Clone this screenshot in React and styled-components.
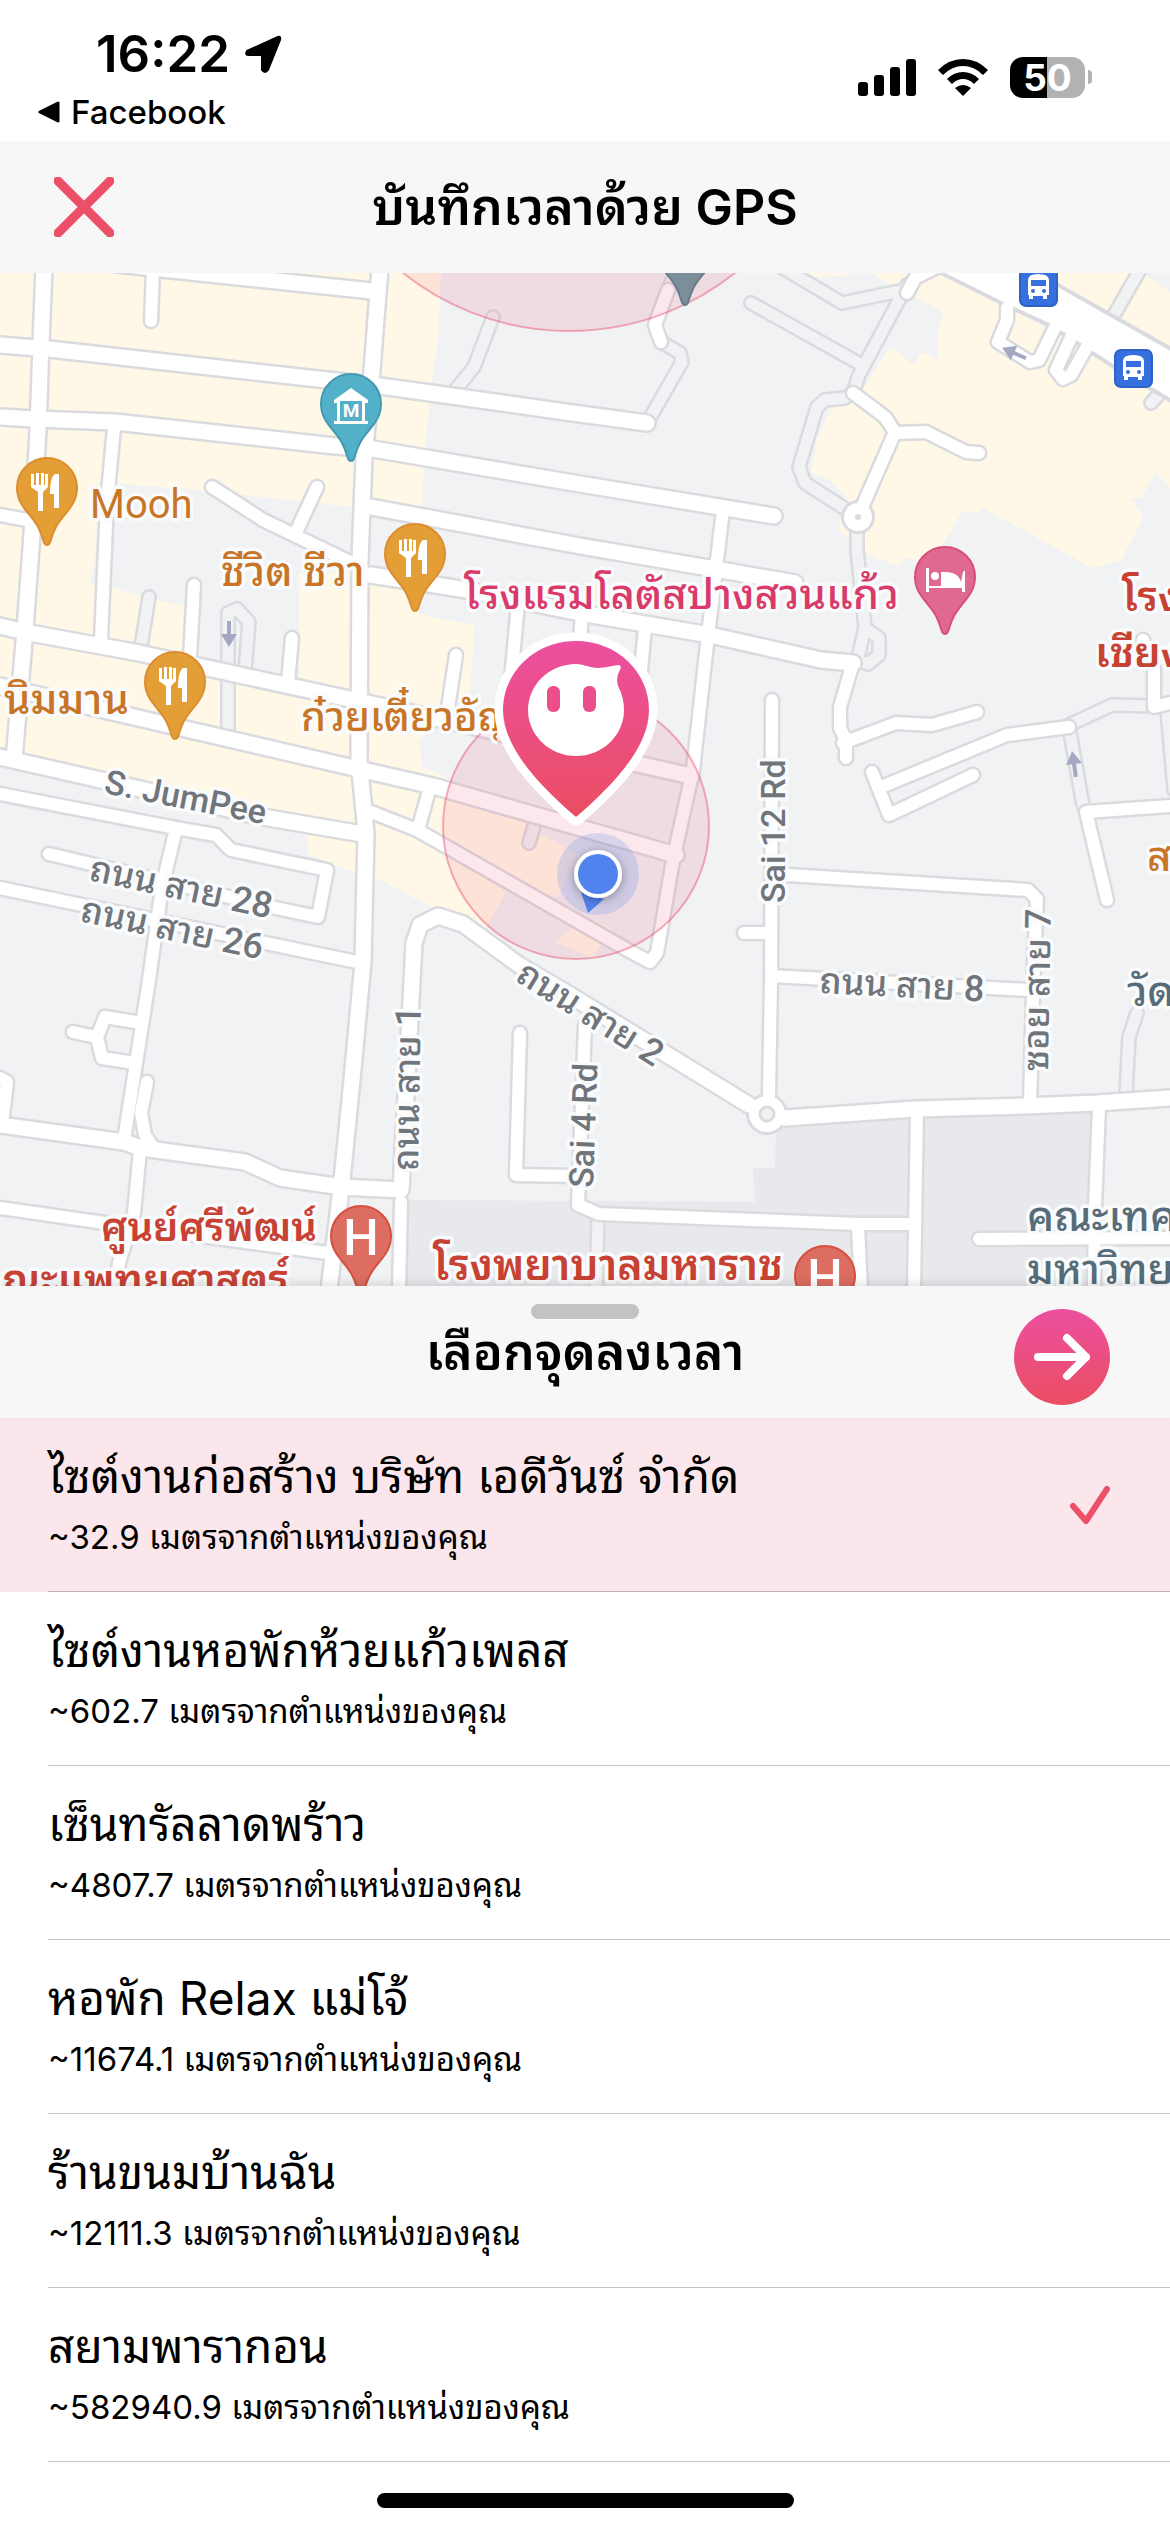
// clock in by GPS: map on top, list of check-in points below
import React, { useState } from 'react';
import styled, { createGlobalStyle } from 'styled-components';

const GlobalStyle = createGlobalStyle`
  * {
    box-sizing: border-box;
  }
  body {
    margin: 0;
    background-color: #fff;
    color: #000;
    font-family: Inter, 'Noto Sans Thai Looped', Loma, Waree, 'Noto Sans Thai', sans-serif;
  }
  button {
    border: none;
    padding: 0;
    background: none;
    color: inherit;
    font: inherit;
    cursor: pointer;
  }
`;

const Screen = styled.div`
  display: flex;
  flex-direction: column;
  min-height: 100vh;
`;

const StatusBar = styled.div`
  display: flex;
  justify-content: space-between;
  height: 141px;
  padding: 24px 78px 0 36px;
`;

const StatusLeft = styled.div`
  display: flex;
  flex-direction: column;
`;

const Clock = styled.div`
  display: flex;
  align-items: center;
  gap: 13px;
  padding-left: 60px;
  font-size: 51px;
  font-weight: 600;
  line-height: 60px;
`;

const BackLink = styled.a`
  display: flex;
  align-items: center;
  gap: 11px;
  color: #000;
  font-size: 33px;
  font-weight: 500;
  line-height: 56px;
  text-decoration: none;
`;

const StatusRight = styled.div`
  display: flex;
  align-items: center;
  gap: 21px;
  height: 106px;
`;

const Battery = styled.div`
  display: flex;
  align-items: center;
  gap: 3px;
`;

const BatteryBody = styled.div`
  width: 75px;
  height: 41px;
  border-radius: 13px;
  background: linear-gradient(to right, #000 50%, #b2b2b2 50%);
  color: #fff;
  font-size: 37px;
  font-weight: 700;
  line-height: 41px;
  text-align: center;
`;

const BatteryTip = styled.div`
  width: 4px;
  height: 14px;
  border-radius: 0 4px 4px 0;
  background-color: #b2b2b2;
`;

const Header = styled.header`
  display: grid;
  grid-template-columns: 60px 1fr 60px;
  align-items: center;
  height: 132px;
  padding: 0 54px;
  background-color: #f7f7f7;
`;

const Title = styled.h1`
  margin: 0;
  font-size: 50px;
  font-weight: 600;
  line-height: 72px;
  text-align: center;
`;

const IconButton = styled.button`
  display: flex;
  align-items: center;
  justify-content: center;
`;

const MapArea = styled.main`
  position: relative;
  flex: 1;
  min-height: 600px;
  overflow: hidden;
  background-color: #f0f2f4;
`;

const MapCanvas = styled.svg`
  position: absolute;
  inset: 0;
  width: 100%;
  height: 100%;
`;

const MapLabel = styled.text`
  fill: ${props => props.$color};
  stroke: #fafbfc;
  stroke-width: 7px;
  stroke-linejoin: round;
  paint-order: stroke;
  font-family: Roboto, 'Noto Sans Thai Looped', Loma, Waree, 'Noto Sans Thai', sans-serif;
  font-size: ${props => props.$size}px;
  font-weight: ${props => props.$weight || 500};
`;

const PinLetter = styled.text`
  fill: #fff;
  font-family: Roboto, sans-serif;
  font-size: ${props => props.$size}px;
  font-weight: ${props => props.$weight};
  text-anchor: middle;
`;

const SheetHeader = styled.div`
  display: grid;
  grid-template-columns: 96px 1fr 96px;
  align-items: center;
  height: 132px;
  padding: 18px 60px 8px;
  background-color: #f7f7f7;
  box-shadow: 0 -4px 8px rgba(0, 0, 0, 0.1);
  z-index: 1;
`;

const SheetTitle = styled.div`
  display: flex;
  flex-direction: column;
  align-items: center;
  grid-column: 2;
  height: 106px;
`;

const Handle = styled.div`
  width: 108px;
  height: 15px;
  border-radius: 8px;
  background-color: #c3c4c2;
`;

const Subtitle = styled.h2`
  margin: 0;
  font-size: 50px;
  font-weight: 600;
  line-height: 66px;
`;

const NextButton = styled(IconButton)`
  width: 96px;
  height: 96px;
  border-radius: 50%;
  background-image: linear-gradient(#ec4f9f, #ea4e62);
`;

const SiteList = styled.ul`
  margin: 0;
  padding: 0;
  list-style: none;
`;

const SiteItem = styled.li`
  padding-left: 48px;
  background-color: ${props => (props.$active ? '#fbe7eb' : '#fff')};
`;

const SiteButton = styled.button`
  display: flex;
  align-items: center;
  justify-content: space-between;
  width: 100%;
  height: 174px;
  padding-right: 60px;
  border-bottom: 1px solid ${props => (props.$active ? '#c3b3b8' : '#c5c5c7')};
  text-align: left;
`;

const SiteName = styled.div`
  font-size: 46px;
  line-height: 64px;
`;

const SiteDistance = styled.div`
  font-size: 33px;
  line-height: 58px;
`;

const HomeBar = styled.div`
  display: flex;
  justify-content: center;
  height: 70px;
  padding-top: 31px;
`;

const HomeIndicator = styled.div`
  width: 417px;
  height: 15px;
  border-radius: 8px;
  background-color: #000;
`;

const sites = [
  { name: 'ไซต์งานก่อสร้าง บริษัท เอดีวันซ์ จำกัด', distance: '32.9' },
  { name: 'ไซต์งานหอพักห้วยแก้วเพลส', distance: '602.7' },
  { name: 'เซ็นทรัลลาดพร้าว', distance: '4807.7' },
  { name: 'หอพัก Relax แม่โจ้', distance: '11674.1' },
  { name: 'ร้านขนมบ้านฉัน', distance: '12111.3' },
  { name: 'สยามพารากอน', distance: '582940.9' }
];

const blocks = [
  '0,273 441,273 438,340 432,380 424,460 422,508 352,507 206,491 100,482 95,560 90,583 113,588 150,598 201,610 200,668 299,690 299,573 415,573 418,613 433,617 475,625 470,690 420,740 422,767 452,780 438,797 528,822 524,838 543,835 580,855 557,898 506,892 485,930 433,908 384,882 356,873 309,855 306,830 0,765',
  '585,917 612,928 593,958 555,942',
  '872,273 894,287 915,297 943,312 937,337 939,360 921,352 914,365 890,347 862,390 830,410 817,440 811,473 830,480 847,497 838,530 866,553 899,567 904,557 920,563 941,547 962,512 980,513 981,507 1092,568 1121,560 1143,518 1131,498 1141,498 1156,472 1170,488 1170,398 1001,303 941,273',
  '1052,273 1142,273 1170,292 1170,352 1052,285',
  '790,273 850,273 845,276 815,277'
];

const campus =
  '401,1200 755,1202 753,1168 775,1168 776,1120 915,1109 1097,1103 1095,1239 1094,1290 401,1290';

const serviceRoads = [
  '149,597 141,647',
  '228,733 228,613 237,609 249,622 245,670',
  '493,317 474,367 453,393',
  '675,273 668,290',
  '661,342 680,353 682,362 647,423',
  '853,393 845,398 825,400 817,407 799,467 805,483 847,510',
  '853,393 859,375 907,285',
  '751,303 862,365',
  '783,268 842,303 900,291',
  '857,527 857,550 865,628 857,662',
  '865,628 879,638 879,655 868,664 857,660',
  '1141,268 1114,315',
  '1163,390 1151,403',
  '1069,725 1112,705 1154,706',
  '1069,727 1083,805',
  '1167,710 1174,790',
  '535,823 529,843',
  '1137,1013 1129,1037 1126,1093',
  '598,1220 596,1290'
];

const minorRoads = [
  '153,268 151,321',
  '114,427 107,503 101,640',
  '0,515 27,520',
  '212,487 263,520 354,564',
  '317,487 297,530',
  '194,585 190,658',
  '292,638 288,682',
  '456,655 448,708',
  '518,603 511,680',
  '582,613 580,640',
  '645,628 640,680',
  '49,854 271,907 318,917 327,870 231,850 216,835 181,829 0,794',
  '0,888 357,962',
  '175,833 162,887 149,980 124,1140',
  '141,1023 105,1017 97,1037 102,1058 134,1063',
  '73,1032 96,1037',
  '0,1078 7,1082 2,1124',
  '147,1082 141,1113 145,1135 152,1146',
  '140,1150 134,1213 119,1263 115,1290',
  '0,1208 98,1222 327,1253',
  '401,1202 399,1290',
  '520,1033 516,1175 575,1176',
  '585,1025 578,1205 599,1214 858,1224 914,1224',
  '858,1226 861,1290',
  '917,1110 914,1290',
  '1099,1107 1095,1207 1094,1290',
  '979,1239 1170,1238',
  '772,700 771,980 769,1095',
  '744,933 768,933',
  '771,874 1028,890 1037,899 1034,960 1030,1105',
  '771,976 1028,990',
  '843,743 896,723 932,725 977,712',
  '853,663 840,707 840,728 846,740 846,758',
  '872,772 889,815 973,775',
  '881,787 1007,735 1069,727',
  '1143,640 1154,670 1154,707 1170,703',
  '1107,900 1086,812 1170,806',
  '863,505 895,432 885,417 853,393',
  '895,433 926,432 966,452 979,453',
  '668,290 655,325 661,342',
  '907,293 915,278 935,268',
  '1007,308 1007,320 998,342 1030,362 1039,360 1056,325',
  '1073,333 1056,370 1063,379 1071,375 1088,345',
  '723,510 708,635 693,770 673,860 657,953 650,962 633,953 417,830 371,812',
  '430,787 418,830'
];

const mainRoads = [
  '100,262 162,269 372,291',
  '44,268 41,343 38,430 33,520 25,630 14,760',
  '0,345 49,349 327,380 380,386 452,396 580,414 647,423',
  '0,417 34,419 115,422 335,446 373,449 580,484 774,516',
  '371,507 580,546 721,570 795,583',
  '371,575 467,590 580,613 651,625 710,635 821,660 853,663',
  '0,626 30,633 139,653 203,667 354,700 497,732 633,763 691,776',
  '0,686 203,733 354,768 433,786 676,855',
  '0,757 263,817 362,834',
  '380,268 371,383 364,457 360,560 359,760 366,833 363,962 352,1080 342,1180 329,1290',
  '0,1125 124,1142 141,1148 245,1162 280,1178 342,1187 401,1190 414,943 420,925 438,916 463,924 519,965 570,995 749,1105',
  '785,1118 915,1109 1024,1106 1097,1103 1170,1098'
];

const highway = '941,273 1001,303 1049,325 1114,367 1180,406 1180,354 1058,285 1040,260 935,262';

const placeLabels = [
  { text: 'Mooh', x: 90, y: 518, color: '#c97527', size: 40, weight: 400 },
  { text: 'ชีวิต ชีวา', x: 221, y: 586, color: '#c97527' },
  { text: 'นิมมาน', x: 4, y: 714, color: '#c97527' },
  { text: 'ส', x: 1147, y: 871, color: '#c97527' },
  { text: 'โรงแรมโลตัสปางสวนแก้ว', x: 464, y: 609, color: '#d93a6a' },
  { text: 'โรงพยาบาล', x: 1122, y: 611, color: '#c84233', weight: 600 },
  { text: 'เชียงใหม่', x: 1095, y: 667, color: '#c84233', weight: 600 },
  { text: 'ศูนย์ศรีพัฒน์', x: 101, y: 1241, color: '#c84233', size: 40, weight: 600 },
  { text: 'คณะแพทยศาสตร์', x: 289, y: 1294, color: '#c84233', weight: 600, anchor: 'end' },
  { text: 'โรงพยาบาลมหาราช', x: 433, y: 1280, color: '#c84233', size: 43, weight: 600 },
  { text: 'คณะเทคนิค', x: 1027, y: 1231, color: '#566c78' },
  { text: 'มหาวิทยาลัย', x: 1027, y: 1284, color: '#566c78' },
  { text: 'วัดสวน', x: 1127, y: 1006, color: '#566c78' }
];

const roadLabels = [
  { text: 'S. JumPee', x: 103, y: 793, angle: 11, size: 34 },
  { text: 'ถนน สาย 28', x: 88, y: 880, angle: 12 },
  { text: 'ถนน สาย 26', x: 79, y: 921, angle: 12 },
  { text: 'ถนน สาย 1', x: 418, y: 1171, angle: -89 },
  { text: 'Sai 4 Rd', x: 593, y: 1188, angle: -88, size: 34 },
  { text: 'Sai 12 Rd', x: 785, y: 903, angle: -90, size: 34 },
  { text: 'ถนน สาย 8', x: 819, y: 993, angle: 3 },
  { text: 'ซอย สาย 7', x: 1048, y: 1071, angle: -89 },
  { text: 'ถนน สาย 2', x: 514, y: 980, angle: 32 }
];

const PIN_SHAPE =
  'M0 0C-4 0 -3 -6 -8 -16C-14 -30 -30 -38 -30 -57A30 30 0 0 1 30 -57C30 -38 14 -30 8 -16C3 -6 4 0 0 0Z';

const Roads = ({ lines, width, fill }) => (
  <g fill="none" strokeLinecap="round" strokeLinejoin="round">
    {lines.map(points => (
      <polyline key={points} points={points} stroke={fill} strokeWidth={width} />
    ))}
  </g>
);

const Pin = ({ x, y, fill, stroke, children }) => (
  <g transform={`translate(${x} ${y})`}>
    <path d={PIN_SHAPE} fill={fill} stroke={stroke} strokeWidth="2" />
    {children}
  </g>
);

const FoodPin = ({ x, y }) => (
  <Pin x={x} y={y} fill="#e39e36" stroke="#dc8d2f">
    <path
      fill="#fff"
      d="M-16 -71h3v11h2v-12h3v12h2v-12h3v12h1v-11h3v13l-5 5v19h-5v-19l-7 -5zM5 -51h-2q0 -17 5 -20h4v34h-5v-14z"
    />
  </Pin>
);

const HospitalPin = ({ x, y }) => (
  <Pin x={x} y={y} fill="#dc6d60" stroke="#d5503f">
    <PinLetter y={-38} $size={50} $weight={500}>
      H
    </PinLetter>
  </Pin>
);

const BusStop = ({ x, y }) => (
  <g transform={`translate(${x} ${y})`}>
    <rect x="1" y="1" width="37" height="37" rx="6" fill="#3670de" stroke="#2f62c6" strokeWidth="2" />
    <path fill="#fff" d="M9 12q0 -6 10 -6q11 0 11 6v15h-2v4h-4v-3h-10v3h-4v-4h-1z" />
    <rect x="12" y="12" width="15" height="6" fill="#3670de" />
    <circle cx="14" cy="23" r="2" fill="#3670de" />
    <circle cx="25" cy="23" r="2" fill="#3670de" />
  </g>
);

const Arrow = ({ x, y, angle }) => (
  <path
    transform={`translate(${x} ${y}) rotate(${angle})`}
    d="M0 -13L8 0H2V13H-2V0H-8Z"
    fill="#a5a8c2"
  />
);

const CityMap = () => (
  <MapCanvas viewBox="0 273 1170 1013" preserveAspectRatio="xMidYMid slice" aria-label="แผนที่">
    <defs>
      <linearGradient id="brand" x1="0" y1="0" x2="0" y2="1">
        <stop offset="0" stopColor="#ec4f9f" />
        <stop offset="1" stopColor="#ea4e62" />
      </linearGradient>
      <filter id="dotShadow" x="-50%" y="-50%" width="200%" height="200%">
        <feDropShadow dx="0" dy="2" stdDeviation="5" floodOpacity="0.35" />
      </filter>
      <clipPath id="noodleClip">
        <rect x="280" y="670" width="217" height="90" />
      </clipPath>
    </defs>

    {blocks.map(points => (
      <polygon key={points} points={points} fill="#fff8e7" />
    ))}
    <polygon points={campus} fill="#e8e9ed" />

    <Roads lines={serviceRoads} width={16} fill="#dadbdf" />
    <Roads lines={serviceRoads} width={11} fill="#f0f2f4" />
    <Roads lines={minorRoads} width={17} fill="#dadbdf" />
    <Roads lines={mainRoads} width={20} fill="#dadbdf" />
    <polygon points={highway} fill="#fff" stroke="#dadbdf" strokeWidth="4" />
    <circle cx="858" cy="517" r="17" fill="#dadbdf" />
    <circle cx="767" cy="1114" r="21" fill="#dadbdf" />
    <Roads lines={minorRoads} width={12} fill="#fff" />
    <Roads lines={mainRoads} width={15} fill="#fff" />
    <circle cx="858" cy="517" r="14" fill="#fff" />
    <circle cx="767" cy="1114" r="18" fill="#fff" />
    <circle cx="858" cy="517" r="3" fill="#dadbdf" />
    <circle cx="767" cy="1114" r="7" fill="#f0f2f4" stroke="#dadbdf" strokeWidth="3" />

    <Arrow x={229} y={634} angle={180} />
    <Arrow x={1014} y={353} angle={-66} />
    <Arrow x={1074} y={764} angle={-8} />

    <g fill="#eb4e6a" fillOpacity="0.13" stroke="#eb4e6a" strokeOpacity="0.45" strokeWidth="2">
      <circle cx="569" cy="65" r="266" />
      <circle cx="576" cy="826" r="133" />
    </g>

    {roadLabels.map(({ text, x, y, angle, size = 36 }) => (
      <MapLabel
        key={text}
        transform={`translate(${x} ${y}) rotate(${angle})`}
        $color="#70757b"
        $size={size}
      >
        {text}
      </MapLabel>
    ))}
    {placeLabels.map(({ text, x, y, color, size = 42, weight, anchor }) => (
      <MapLabel
        key={text}
        x={x}
        y={y}
        textAnchor={anchor}
        $color={color}
        $size={size}
        $weight={weight}
      >
        {text}
      </MapLabel>
    ))}
    <g clipPath="url(#noodleClip)">
      <MapLabel x={301} y={731} $color="#c97527" $size={40}>
        ก๋วยเตี๋ยวอัญ
      </MapLabel>
    </g>

    <FoodPin x={47} y={545} />
    <FoodPin x={415} y={611} />
    <FoodPin x={175} y={739} />
    <Pin x={351} y={461} fill="#52b0c8" stroke="#4399af">
      <path fill="#fff" d="M0 -73l17 12v3h-3v18h3v3h-34v-3h3v-18h-3v-3zM-11 -60v20h22v-20z" fillRule="evenodd" />
      <PinLetter y={-44} $size={19} $weight={700}>
        M
      </PinLetter>
    </Pin>
    <Pin x={945} y={634} fill="#df698f" stroke="#da4c7b">
      <path fill="#fff" d="M-19 -66h3v18h12v-14h6q12 1 14 10l2 -10q1 -2 2 -1v21h-3v-4h-33v4h-3z" />
      <circle cx="-10" cy="-58" r="4" fill="#fff" />
    </Pin>
    <HospitalPin x={361} y={1293} />
    <HospitalPin x={825} y={1333} />
    <Pin x={685} y={305} fill="#7b8e99" stroke="#657d89" />
    <BusStop x={1019} y={268} />
    <BusStop x={1114} y={349} />

    <circle cx="598" cy="874" r="41" fill="#5183ee" fillOpacity="0.2" />
    <path d="M581 892L588 913L604 899Z" fill="#5183ee" />
    <circle cx="598" cy="874" r="24" fill="#fff" filter="url(#dotShadow)" />
    <circle cx="598" cy="874" r="20" fill="#5183ee" />

    <path
      d="M576 641C617 641 649 672 649 710C649 748 612 786 576 817C540 786 503 748 503 710C503 672 535 641 576 641Z"
      fill="#fff"
      stroke="#fff"
      strokeWidth="17"
      strokeLinejoin="round"
    />
    <path
      d="M576 641C617 641 649 672 649 710C649 748 612 786 576 817C540 786 503 748 503 710C503 672 535 641 576 641Z"
      fill="url(#brand)"
    />
    <path
      d="M576 664C583 664 587 667 597 668C607 668 614 665 619 665Q622 666 620 670C617 675 616 682 619 688C622 694 624 702 624 710A48 46 0 0 1 528 710A48 46 0 0 1 576 664Z"
      fill="#fff"
    />
    <rect x="547" y="686" width="13" height="26" rx="6" fill="#eb4e8b" />
    <rect x="583" y="686" width="13" height="26" rx="6" fill="#eb4e8b" />
  </MapCanvas>
);

const App = () => {
  const [selected, setSelected] = useState(0);

  return (
    <>
      <GlobalStyle />
      <Screen>
        <StatusBar>
          <StatusLeft>
            <Clock>
              16:22
              <svg width="40" height="40" viewBox="0 0 40 40" aria-hidden="true">
                <path
                  d="M35 3L4 17Q2 21 5 21H19V36Q22 40 25 36L37 6Q38 2 35 3Z"
                  stroke="#000"
                  strokeWidth="2"
                  strokeLinejoin="round"
                />
              </svg>
            </Clock>
            <BackLink href="#facebook">
              <svg width="24" height="22" viewBox="0 0 24 22" aria-hidden="true">
                <path d="M22 2V20L4 11Z" stroke="#000" strokeWidth="3" strokeLinejoin="round" />
              </svg>
              Facebook
            </BackLink>
          </StatusLeft>
          <StatusRight>
            <svg width="58" height="38" viewBox="0 0 58 38" aria-hidden="true">
              <rect x="0" y="24" width="10" height="14" rx="3" />
              <rect x="16" y="17" width="10" height="21" rx="3" />
              <rect x="32" y="9" width="10" height="29" rx="3" />
              <rect x="48" y="1" width="10" height="37" rx="3" />
            </svg>
            <svg width="52" height="38" viewBox="0 0 52 38" aria-hidden="true">
              <path d="M1 12Q12 1 26 1T51 12L46 17Q37 8 26 8T6 17Z" />
              <path d="M10 21Q17 14 26 14T42 21L37 26Q32 21 26 21T15 26Z" />
              <path d="M18 30Q22 27 26 27T34 30L26 38Z" />
            </svg>
            <Battery>
              <BatteryBody>50</BatteryBody>
              <BatteryTip />
            </Battery>
          </StatusRight>
        </StatusBar>

        <Header>
          <IconButton type="button" aria-label="ปิด">
            <svg width="60" height="60" viewBox="0 0 60 60">
              <path d="M4 4L56 56M56 4L4 56" stroke="#ec5068" strokeWidth="9" strokeLinecap="round" />
            </svg>
          </IconButton>
          <Title>บันทึกเวลาด้วย GPS</Title>
        </Header>

        <MapArea>
          <CityMap />
        </MapArea>

        <SheetHeader>
          <SheetTitle>
            <Handle />
            <Subtitle>เลือกจุดลงเวลา</Subtitle>
          </SheetTitle>
          <NextButton type="button" aria-label="ถัดไป">
            <svg width="56" height="48" viewBox="0 0 56 48" fill="none">
              <path
                d="M4 24H52M33 5L52 24L33 43"
                stroke="#fff"
                strokeWidth="8"
                strokeLinecap="round"
                strokeLinejoin="round"
              />
            </svg>
          </NextButton>
        </SheetHeader>

        <SiteList>
          {sites.map(({ name, distance }, index) => (
            <SiteItem key={name} $active={index === selected}>
              <SiteButton
                type="button"
                $active={index === selected}
                onClick={() => setSelected(index)}
              >
                <div>
                  <SiteName>{name}</SiteName>
                  <SiteDistance>~{distance} เมตรจากตำแหน่งของคุณ</SiteDistance>
                </div>
                {index === selected && (
                  <svg width="40" height="40" viewBox="0 0 40 40" fill="none" aria-hidden="true">
                    <path
                      d="M3 21L16 36L37 4"
                      stroke="#ec5068"
                      strokeWidth="6"
                      strokeLinecap="round"
                      strokeLinejoin="round"
                    />
                  </svg>
                )}
              </SiteButton>
            </SiteItem>
          ))}
        </SiteList>

        <HomeBar>
          <HomeIndicator />
        </HomeBar>
      </Screen>
    </>
  );
};

export default App;
